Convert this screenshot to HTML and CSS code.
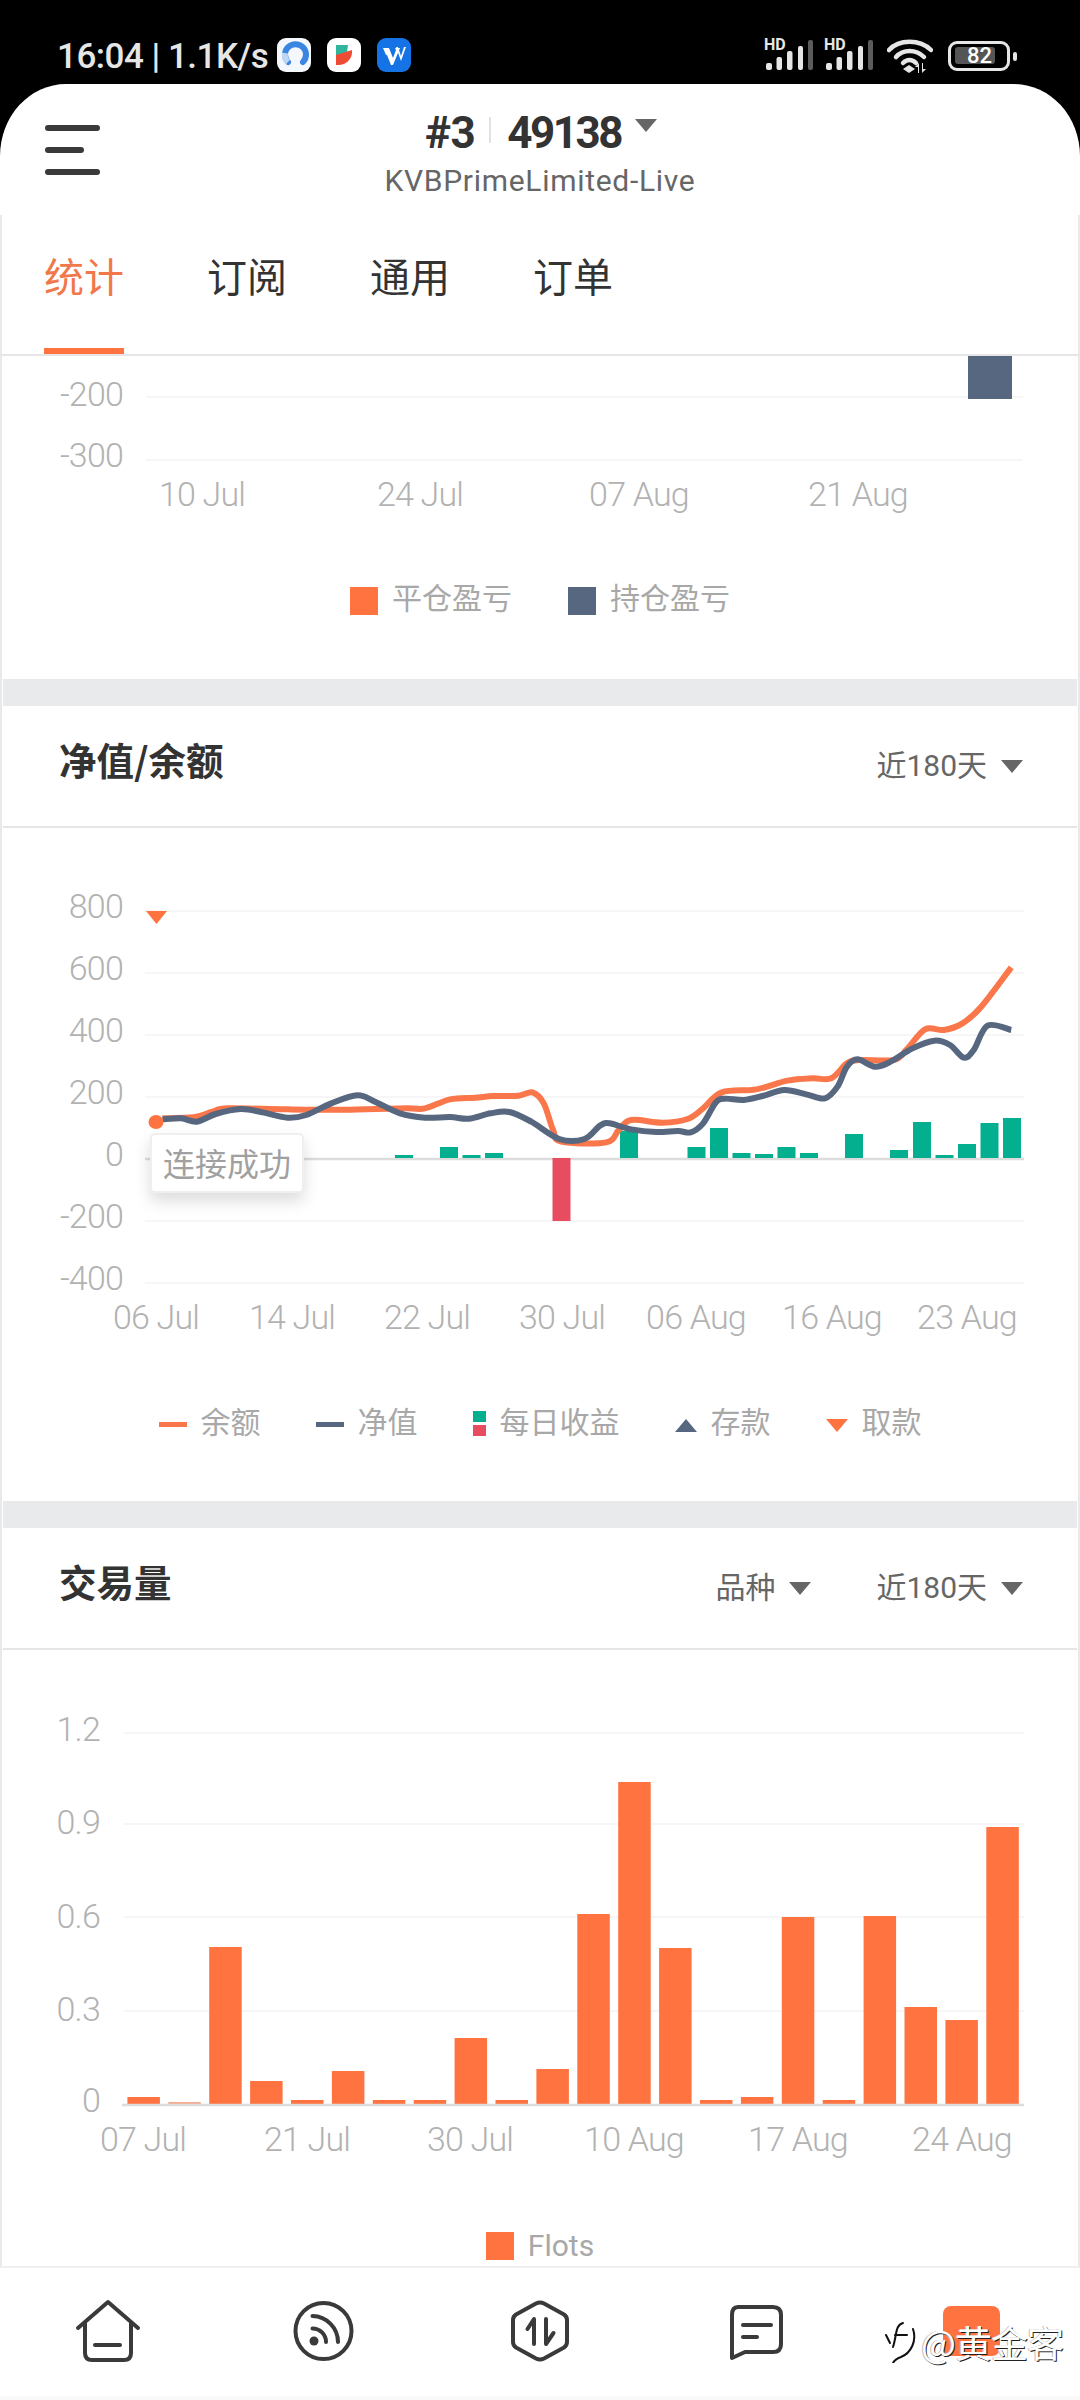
FILE: index.html
```html
<!DOCTYPE html>
<html lang="zh">
<head>
<meta charset="utf-8">
<title>KVBPrimeLimited-Live</title>
<link rel="stylesheet" href="styles.css">
</head>
<body>
<div class="app">
  <div class="status">
    <span class="clock">16:04 | 1.1K/s</span>
    <div class="app-icons">
      <svg class="app-icon" viewBox="0 0 34 34"><rect width="34" height="34" rx="9" fill="#f4f8fd"/><path class="ring" d="M26 24 A10.5 10.5 0 1 0 11 24"/><path class="ring-light" d="M8 15 A10 10 0 0 0 11 24"/></svg>
      <svg class="app-icon" viewBox="0 0 34 34"><rect width="34" height="34" rx="9" fill="#fff"/><path fill="#2fb59c" d="M9 7h12l-1 7-11 4z"/><path fill="#ee4b35" d="M9 17l16-5c1 8-5 16-16 15z"/></svg>
      <svg class="app-icon" viewBox="0 0 34 34"><rect width="34" height="34" rx="9" fill="#1673e6"/><path fill="#fff" d="M6 10h6l4 10 3-8-1-2h5l-7 17h-2l-4-10-1 0zM19 9l2 0 3 9 3-9h2l-5 14z"/></svg>
    </div>
    <div class="sys-icons">
      <svg class="signal" viewBox="0 0 48 30"><text class="hd" x="-1" y="10">HD</text><rect class="sb" x="1" y="23" width="6" height="7" rx="2"/><rect class="sb" x="11.5" y="17" width="5.5" height="13" rx="2"/><rect class="sb" x="22" y="11" width="5.5" height="19" rx="2"/><rect class="sb" x="33" y="6" width="5" height="24" rx="2"/><rect class="sb-off" x="43" y="0" width="5" height="30" rx="2"/></svg>
      <svg class="signal" viewBox="0 0 48 30"><text class="hd" x="-1" y="10">HD</text><rect class="sb" x="1" y="23" width="6" height="7" rx="2"/><rect class="sb" x="11.5" y="17" width="5.5" height="13" rx="2"/><rect class="sb" x="22" y="11" width="5.5" height="19" rx="2"/><rect class="sb" x="33" y="6" width="5" height="24" rx="2"/><rect class="sb-off" x="43" y="0" width="5" height="30" rx="2"/></svg>
      <svg class="wifi" viewBox="0 0 46 35"><path class="wf" d="M2 12 C12 1 33 1 44 12"/><path class="wf" d="M9 19 C16 11 29 11 37 19"/><path class="wf" d="M16 25 C20 21 25 21 29 25"/><path fill="#e6e6e6" d="M22 27l6 4-6 4-6-4z"/><path fill="#e6e6e6" d="M31 35V29h-3l4-4v10zM35 25v10l4-4h-3v-6z"/></svg>
      <div class="battery"><div class="battery-body"><span class="battery-fill">82</span></div><i class="battery-tip"></i></div>
    </div>
  </div>

  <header class="topbar">
    <div class="burger"><i class="b-long"></i><i class="b-short"></i><i class="b-long"></i></div>
    <div class="account">
      <div class="acc-main"><span class="acc-id">#3</span><i class="acc-sep"></i><span class="acc-num">49138</span><i class="caret acc-caret"></i></div>
      <div class="acc-sub">KVBPrimeLimited-Live</div>
    </div>
  </header>

  <main class="body">
    <nav class="tabs">
      <a class="tab tab-on">统计</a><a class="tab">订阅</a><a class="tab">通用</a><a class="tab">订单</a>
    </nav>

    <section class="panel panel-a">
      <svg class="chart chart-a" viewBox="0 356 1080 174">
        <line class="grid" x1="146" x2="1023" y1="397" y2="397"/>
        <line class="grid" x1="146" x2="1023" y1="460" y2="460"/>
        <rect class="navy" x="968" y="356" width="44" height="43"/>
        <text class="tick end" x="123" y="406">-200</text>
        <text class="tick end" x="123" y="467">-300</text>
        <text class="tick mid" x="202" y="506">10 Jul</text>
        <text class="tick mid" x="420" y="506">24 Jul</text>
        <text class="tick mid" x="639" y="506">07 Aug</text>
        <text class="tick mid" x="858" y="506">21 Aug</text>
      </svg>
      <div class="legend legend-a">
        <span class="lg"><i class="sq sq-orange"></i>平仓盈亏</span>
        <span class="lg"><i class="sq sq-navy"></i>持仓盈亏</span>
      </div>
    </section>

    <div class="gap"></div>
    <div class="head">
      <h2 class="head-title">净值/余额</h2>
      <div class="picks"><span class="pick">近180天<i class="caret"></i></span></div>
    </div>

    <section class="panel panel-b">
      <svg class="chart chart-b" viewBox="0 828 1080 552">
        <line class="grid" x1="145" x2="1024" y1="911" y2="911"/>
        <line class="grid" x1="145" x2="1024" y1="973" y2="973"/>
        <line class="grid" x1="145" x2="1024" y1="1035" y2="1035"/>
        <line class="grid" x1="145" x2="1024" y1="1097" y2="1097"/>
        <line class="grid" x1="145" x2="1024" y1="1221" y2="1221"/>
        <line class="grid" x1="145" x2="1024" y1="1283" y2="1283"/>
        <line class="zero" x1="145" x2="1024" y1="1159" y2="1159"/>
        <text class="tick end" x="123" y="918">800</text>
        <text class="tick end" x="123" y="980">600</text>
        <text class="tick end" x="123" y="1042">400</text>
        <text class="tick end" x="123" y="1104">200</text>
        <text class="tick end" x="123" y="1166">0</text>
        <text class="tick end" x="123" y="1228">-200</text>
        <text class="tick end" x="123" y="1290">-400</text>
        <g class="green">
          <rect x="395" y="1155" width="18" height="3"/><rect x="440" y="1147" width="18" height="11"/><rect x="462.5" y="1155" width="18" height="3"/><rect x="485" y="1153" width="18" height="5"/><rect x="620" y="1131" width="18" height="27"/><rect x="687.5" y="1147" width="18" height="11"/><rect x="710" y="1128" width="18" height="30"/><rect x="732.5" y="1153" width="18" height="5"/><rect x="755" y="1154" width="18" height="4"/><rect x="777.5" y="1147" width="18" height="11"/><rect x="800" y="1153" width="18" height="5"/><rect x="845" y="1134" width="18" height="24"/><rect x="890" y="1150" width="18" height="8"/><rect x="913" y="1122" width="18" height="36"/><rect x="935.5" y="1155" width="18" height="3"/><rect x="958" y="1144" width="18" height="14"/><rect x="980.5" y="1123" width="18" height="35"/><rect x="1003" y="1118" width="18" height="40"/>
        </g>
        <rect class="red" x="552.5" y="1158" width="18" height="63"/>
        <path id="line-balance" class="line line-orange" d=""/>
        <path id="line-equity" class="line line-navy" d=""/>
        <ellipse class="orange" cx="156" cy="1122" rx="7.5" ry="7"/>
        <path class="orange" d="M146 911h21l-10.500 13z"/>
        <text class="tick mid" x="156" y="1329">06 Jul</text>
        <text class="tick mid" x="292" y="1329">14 Jul</text>
        <text class="tick mid" x="427" y="1329">22 Jul</text>
        <text class="tick mid" x="562" y="1329">30 Jul</text>
        <text class="tick mid" x="696" y="1329">06 Aug</text>
        <text class="tick mid" x="832" y="1329">16 Aug</text>
        <text class="tick mid" x="967" y="1329">23 Aug</text>
      </svg>
      <div class="toast">连接成功</div>
      <div class="legend legend-b">
        <span class="lg"><i class="dash dash-orange"></i>余额</span>
        <span class="lg"><i class="dash dash-navy"></i>净值</span>
        <span class="lg"><i class="duo"><b class="duo-g"></b><b class="duo-r"></b></i>每日收益</span>
        <span class="lg"><i class="tri tri-up"></i>存款</span>
        <span class="lg"><i class="tri tri-down"></i>取款</span>
      </div>
    </section>

    <div class="gap"></div>
    <div class="head">
      <h2 class="head-title">交易量</h2>
      <div class="picks"><span class="pick">品种<i class="caret"></i></span><span class="pick">近180天<i class="caret"></i></span></div>
    </div>

    <section class="panel panel-c">
      <svg class="chart chart-c" viewBox="0 1650 1080 540">
        <line class="grid" x1="124" x2="1024" y1="1733" y2="1733"/>
        <line class="grid" x1="124" x2="1024" y1="1824" y2="1824"/>
        <line class="grid" x1="124" x2="1024" y1="1917" y2="1917"/>
        <line class="grid" x1="124" x2="1024" y1="2011" y2="2011"/>
        <text class="tick end" x="100" y="1741">1.2</text>
        <text class="tick end" x="100" y="1834">0.9</text>
        <text class="tick end" x="100" y="1928">0.6</text>
        <text class="tick end" x="100" y="2021">0.3</text>
        <text class="tick end" x="100" y="2112">0</text>
        <g class="orange">
          <rect x="127.400" y="2097" width="32.500" height="7"/><rect class="faint" x="168.300" y="2102" width="32.500" height="2"/><rect x="209.200" y="1947" width="32.500" height="157"/><rect x="250.100" y="2081" width="32.500" height="23"/><rect x="291" y="2100" width="32.500" height="4"/><rect x="331.900" y="2071" width="32.500" height="33"/><rect x="372.800" y="2100" width="32.500" height="4"/><rect x="413.700" y="2100" width="32.500" height="4"/><rect x="454.600" y="2038" width="32.500" height="66"/><rect x="495.500" y="2100" width="32.500" height="4"/><rect x="536.400" y="2069" width="32.500" height="35"/><rect x="577.300" y="1914" width="32.500" height="190"/><rect x="618.200" y="1782" width="32.500" height="322"/><rect x="659.100" y="1948" width="32.500" height="156"/><rect x="700" y="2100" width="32.500" height="4"/><rect x="740.900" y="2097" width="32.500" height="7"/><rect x="781.800" y="1917" width="32.500" height="187"/><rect x="822.700" y="2100" width="32.500" height="4"/><rect x="863.600" y="1916" width="32.500" height="188"/><rect x="904.500" y="2007" width="32.500" height="97"/><rect x="945.400" y="2020" width="32.500" height="84"/><rect x="986.300" y="1827" width="32.500" height="277"/>
        </g>
        <line class="zero" x1="122" x2="1024" y1="2105" y2="2105"/>
        <text class="tick mid" x="143" y="2151">07 Jul</text>
        <text class="tick mid" x="307" y="2151">21 Jul</text>
        <text class="tick mid" x="470" y="2151">30 Jul</text>
        <text class="tick mid" x="634" y="2151">10 Aug</text>
        <text class="tick mid" x="798" y="2151">17 Aug</text>
        <text class="tick mid" x="962" y="2151">24 Aug</text>
      </svg>
      <div class="legend legend-c">
        <span class="lg lg-latin"><i class="sq sq-orange"></i>Flots</span>
      </div>
    </section>
  </main>

  <footer class="nav">
    <svg class="nav-svg" viewBox="0 2268 1080 128">
      <g class="ico">
        <path d="M78 2328 L108 2302 L138 2328"/><path d="M85 2323 V2353 Q85 2360 92 2360 H124 Q131 2360 131 2353 V2323"/><path d="M95 2345 H120"/>
        <circle cx="323.500" cy="2331" r="28"/><path d="M312.500 2316 A26 26 0 0 1 338 2342"/><path d="M312.500 2328.500 A13.500 13.500 0 0 1 326 2342"/>
        <path d="M536 2303.500 Q540 2301.500 544 2303.500 L564 2314.500 Q567 2316.500 567 2320 V2342 Q567 2345.500 564 2347.500 L544 2358.500 Q540 2360.500 536 2358.500 L516 2347.500 Q513 2345.500 513 2342 V2320 Q513 2316.500 516 2314.500 Z"/>
        <path d="M534 2344 V2319 L527.500 2329"/><path d="M546 2319 V2344 L553.500 2333"/>
        <path d="M738 2307 H773 Q781 2307 781 2315 V2344 Q781 2352 773 2352 H745 L732 2358 V2315 Q732 2307 738 2307 Z"/><path d="M743 2325 H771"/><path d="M743 2337 H757"/>
      </g>
      <circle class="ico-fill" cx="314" cy="2341" r="4.500"/>
      <rect class="orange" x="943" y="2306" width="57" height="50" rx="8"/>
    </svg>
    <div class="mark">
      <svg class="mark-logo" viewBox="0 0 34 42"><path class="ml" d="M20 2 C12 4 14 14 10 26"/><path class="ml" d="M12 14 H24"/><path class="ml" d="M3 14 L7 22"/><path class="ml" d="M30 8 C34 20 28 32 18 36 Q12 38 10 42"/></svg>
      <span class="mark-text">@黄金客</span>
    </div>
  </footer>
</div>
<script src="chart.js"></script>
</body>
</html>
```
FILE: styles.css
```css
* { box-sizing: border-box; }
html, body { margin: 0; padding: 0; background: #000; }
body { font-family: "Noto Sans CJK SC", Roboto, sans-serif; }
i { display: block; font-style: normal; }

.app { width: 1080px; height: 2400px; overflow: hidden; display: flex; flex-direction: column; background: #000; }

/* status bar */
.status { height: 84px; flex: none; display: flex; align-items: flex-start; padding: 36px 63px 0 57px; color: #e6e6e6; }
.clock { font: 500 35px/42px Roboto, sans-serif; letter-spacing: -.5px; width: 220px; white-space: nowrap; }
.app-icons { display: flex; gap: 16px; margin-top: 2px; }
.app-icon { width: 34px; height: 34px; display: block; }
.ring { fill: none; stroke: #3b86e0; stroke-width: 6; stroke-linecap: round; }
.ring-light { fill: none; stroke: #bcd6f4; stroke-width: 6; }
.sys-icons { margin-left: auto; display: flex; align-items: flex-start; margin-top: 2px; }
.signal { width: 48px; height: 30px; display: block; margin: 2px 12px 0 0; overflow: visible; }
.hd { font: 700 16px Roboto, sans-serif; fill: #e6e6e6; }
.sb { fill: #e6e6e6; }
.sb-off { fill: #5c5c5c; }
.wifi { width: 46px; height: 35px; margin: 0 15px 0 2px; display: block; }
.wf { fill: none; stroke: #e6e6e6; stroke-width: 4.500; stroke-linecap: round; }
.battery { display: flex; align-items: center; height: 30px; margin-top: 3px; }
.battery-body { width: 62px; height: 30px; border: 3.500px solid #e6e6e6; border-radius: 9px; padding: 3px 12px 0 4px; }
.battery-fill { display: block; height: 17px; background: #555; border-radius: 3px; color: #fff; font: 500 22px/17px Roboto, sans-serif; text-align: right; padding-right: 3px; }
.battery-tip { width: 4px; height: 9px; margin-left: 3px; background: #e6e6e6; border-radius: 2px; }

/* title bar */
.topbar { height: 131px; flex: none; background: #fff; border-radius: 66px 66px 0 0 / 72px 72px 0 0; position: relative; display: flex; justify-content: center; }
.burger { position: absolute; left: 45px; top: 41px; display: flex; flex-direction: column; gap: 16px; }
.burger i { height: 6px; border-radius: 3px; background: #3a3a3a; }
.b-long { width: 55px; }
.b-short { width: 39px; }
.account { display: flex; flex-direction: column; align-items: center; padding-top: 25px; }
.acc-main { display: flex; align-items: center; height: 48px; font: 700 44px/48px Roboto, sans-serif; color: #333; margin-left: 2px; }
.acc-id { letter-spacing: -.5px; }
.acc-num { letter-spacing: -2.500px; }
.acc-sep { width: 2px; height: 26px; background: #e2e2e2; margin: 0 16px 6px 14px; }
.acc-caret { margin: -16px 0 0 14px; border-width: 15px 11px 0; }
.acc-sub { font: 400 30px/36px Roboto, sans-serif; letter-spacing: .7px; color: #666; margin-top: 6px; }

.caret { width: 0; height: 0; border-style: solid; border-width: 13px 11px 0; border-color: #666 transparent transparent; }

/* scroll area */
.body { flex: 1; min-height: 0; background: #fff; box-shadow: inset 2px 0 #e9e9e9, inset -2px 0 #e9e9e9; }
.tabs { height: 141px; display: flex; gap: 83px; border-bottom: 2px solid #e6e6e6; margin: 0 2px; padding-left: 42px; }
.tab { width: 80px; height: 139px; font-size: 40px; line-height: 40px; padding-top: 40px; color: #333; text-align: center; white-space: nowrap; }
.tab-on { color: #f0784a; border-bottom: 6px solid #ff7341; }

.panel { position: relative; }
.chart { display: block; width: 1080px; }
.chart-a { height: 174px; }
.chart-b { height: 552px; }
.chart-c { height: 540px; }
.panel-a { height: 323px; }
.panel-b { height: 673px; }
.panel-c { height: 616px; }

.gap { height: 27px; background: #e9eaec; margin: 0 3px; }
.head { height: 122px; margin: 0 3px; padding: 0 54px 0 56px; border-bottom: 2px solid #e6e6e6; display: flex; align-items: center; justify-content: space-between; }
.head-title { margin: -14px 0 0; font-size: 37.500px; font-weight: 700; line-height: 50px; color: #333; }
.picks { display: flex; gap: 65px; }
.pick { display: flex; align-items: center; gap: 14px; font: 400 30px/40px Roboto, "Noto Sans CJK SC", sans-serif; color: #666; }

/* svg marks */
.grid { stroke: #f6f6f6; stroke-width: 2; }
.zero { stroke: #dcdcdc; stroke-width: 2.500; }
.tick { font: 300 34px Roboto, sans-serif; letter-spacing: -.8px; fill: #b2b2b2; }
.end { text-anchor: end; }
.mid { text-anchor: middle; }
.navy { fill: #56677f; }
.orange { fill: #ff7341; }
.faint { fill: #f5ab90; }
.green { fill: #03af8f; }
.red { fill: #e84c60; }
.line { fill: none; stroke-width: 6; stroke-linecap: butt; stroke-linejoin: round; }
.line-orange { stroke: #f9774a; }
.line-navy { stroke: #56677f; }

/* legends */
.legend { display: flex; justify-content: center; gap: 55px; height: 40px; font-size: 30px; line-height: 40px; color: #a8a8a8; }
.legend-a { margin-top: 46px; gap: 56px; }
.legend-b { margin-top: 20px; }
.legend-c { margin-top: 36px; }
.legend-a .lg > i { margin-top: 10px; }
.legend-b .lg > .duo { margin-top: 7px; }
.lg { display: flex; align-items: center; gap: 14px; white-space: nowrap; }
.lg-latin { font-family: Roboto, sans-serif; }
.sq { width: 28px; height: 28px; }
.sq-orange { background: #ff7341; }
.sq-navy { background: #56677f; }
.dash { width: 28px; height: 5px; margin-top: 8px; }
.dash-orange { background: #f9774a; }
.dash-navy { background: #56677f; }
.duo { width: 13px; display: flex; flex-direction: column; gap: 3px; }
.duo b { display: block; height: 11px; }
.duo-g { background: #03af8f; }
.duo-r { background: #e84c60; }
.tri { width: 0; height: 0; border-style: solid; margin-top: 10px; }
.tri-up { border-width: 0 11px 13px; border-color: transparent transparent #56677f; }
.tri-down { border-width: 13px 11px 0; border-color: #ff7341 transparent transparent; }

.toast { position: absolute; left: 150px; top: 305px; width: 154px; height: 60px; background: #fff; border: 2px solid #efefef; border-radius: 5px; box-shadow: 0 8px 16px rgba(0, 0, 0, .14); color: #a0a0a0; font-size: 32px; line-height: 54px; text-align: center; white-space: nowrap; }

/* bottom nav */
.nav { height: 134px; flex: none; background: #fff; border-top: 2px solid #efefef; position: relative; box-shadow: inset 0 -4px #f9f9f9; }
.nav-svg { display: block; width: 1080px; height: 128px; }
.ico { fill: none; stroke: #3a3a3a; stroke-width: 4; stroke-linecap: round; stroke-linejoin: round; }
.ico-fill { fill: #3a3a3a; }
.mark { position: absolute; left: 883px; top: 52px; display: flex; align-items: center; gap: 4px; }
.mark-logo { width: 34px; height: 42px; display: block; }
.ml { fill: none; stroke: #111; stroke-width: 2; stroke-linecap: round; }
.mark-text { color: #fff; font-size: 37px; line-height: 44px; letter-spacing: -1px; text-shadow: 1px 1px 0 #222, -1px 0 0 #bbb; white-space: nowrap; }
```
FILE: chart.js
```js
// Smooth curves for the balance and equity lines. Points are sampled against
// the plot at 1.6 units per pixel horizontally and 3 per pixel vertically.
var balance = [[100,775],[150,772],[180,755],[205,745],[300,748],[400,749],[490,745],[520,745],[560,718],[600,713],[630,708],[670,707],[692,697],[710,730],[725,810],[738,845],[810,847],[830,810],[850,780],[900,788],[940,777],[965,745],[995,697],[1050,688],[1100,662],[1140,655],[1170,655],[1195,610],[1215,600],[1270,600],[1290,570],[1320,508],[1350,510],[1380,490],[1410,440],[1458,322]];
var equity = [[100,778],[130,775],[155,785],[185,762],[225,747],[260,757],[300,773],[330,765],[370,730],[412,706],[440,725],[480,760],[520,773],[560,771],[590,776],[625,760],[655,756],[690,785],[735,837],[775,837],[800,797],[815,790],[850,808],[890,816],[925,813],[945,817],[965,790],[985,728],[1000,716],[1030,720],[1060,708],[1095,690],[1130,703],[1160,715],[1180,680],[1195,620],[1212,598],[1240,620],[1265,605],[1300,565],[1335,542],[1360,555],[1382,593],[1398,570],[1420,497],[1458,510]];

function smooth(raw) {
  var p = raw.map(function (q) { return [100 + q[0] / 1.6, 860 + q[1] / 3]; });
  var d = 'M' + p[0][0] + ' ' + p[0][1];
  for (var i = 0; i < p.length - 1; i++) {
    var a = p[Math.max(i - 1, 0)], b = p[i], c = p[i + 1], e = p[Math.min(i + 2, p.length - 1)];
    d += ' C' + (b[0] + (c[0] - a[0]) / 6) + ' ' + (b[1] + (c[1] - a[1]) / 6) + ' ' +
         (c[0] - (e[0] - b[0]) / 6) + ' ' + (c[1] - (e[1] - b[1]) / 6) + ' ' + c[0] + ' ' + c[1];
  }
  return d;
}
document.getElementById('line-balance').setAttribute('d', smooth(balance));
document.getElementById('line-equity').setAttribute('d', smooth(equity));
```
